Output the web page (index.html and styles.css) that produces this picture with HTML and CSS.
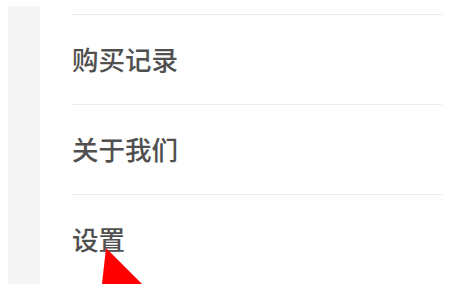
FILE: index.html
```html
<!DOCTYPE html>
<html lang="zh">
<head>
<meta charset="utf-8">
<link rel="stylesheet" href="styles.css">
</head>
<body>
<div class="page">
  <div class="side"></div>
  <ul class="menu">
    <li class="item">购买记录</li>
    <li class="item">关于我们</li>
    <li class="item">设置</li>
  </ul>
</div>
<svg class="arrow" width="60" height="40" viewBox="0 0 60 40">
  <polygon points="16,0 12,36 52,36" fill="#ff0000"/>
</svg>
</body>
</html>
```
FILE: styles.css
```css
html, body {
  margin: 0;
  padding: 0;
  background: #ffffff;
  width: 451px;
  height: 284px;
  overflow: hidden;
  font-family: "Noto Sans CJK SC", "Noto Sans", sans-serif;
}
.page {
  display: flex;
  height: 284px;
}
.side {
  width: 32px;
  margin-left: 8px;
  margin-top: 6px;
  background: #f5f5f5;
}
.menu {
  list-style: none;
  margin: 0 0 0 32px;
  padding: 14px 0 0 0;
  width: 370px;
}
.item {
  border-top: 1px solid #ececec;
  height: 90px;
  display: flex;
  align-items: center;
  padding-bottom: 2px;
  box-sizing: border-box;
  font-size: 26.5px;
  font-weight: 500;
  color: #505050;
}
.arrow {
  position: absolute;
  left: 90px;
  top: 248px;
}
```
